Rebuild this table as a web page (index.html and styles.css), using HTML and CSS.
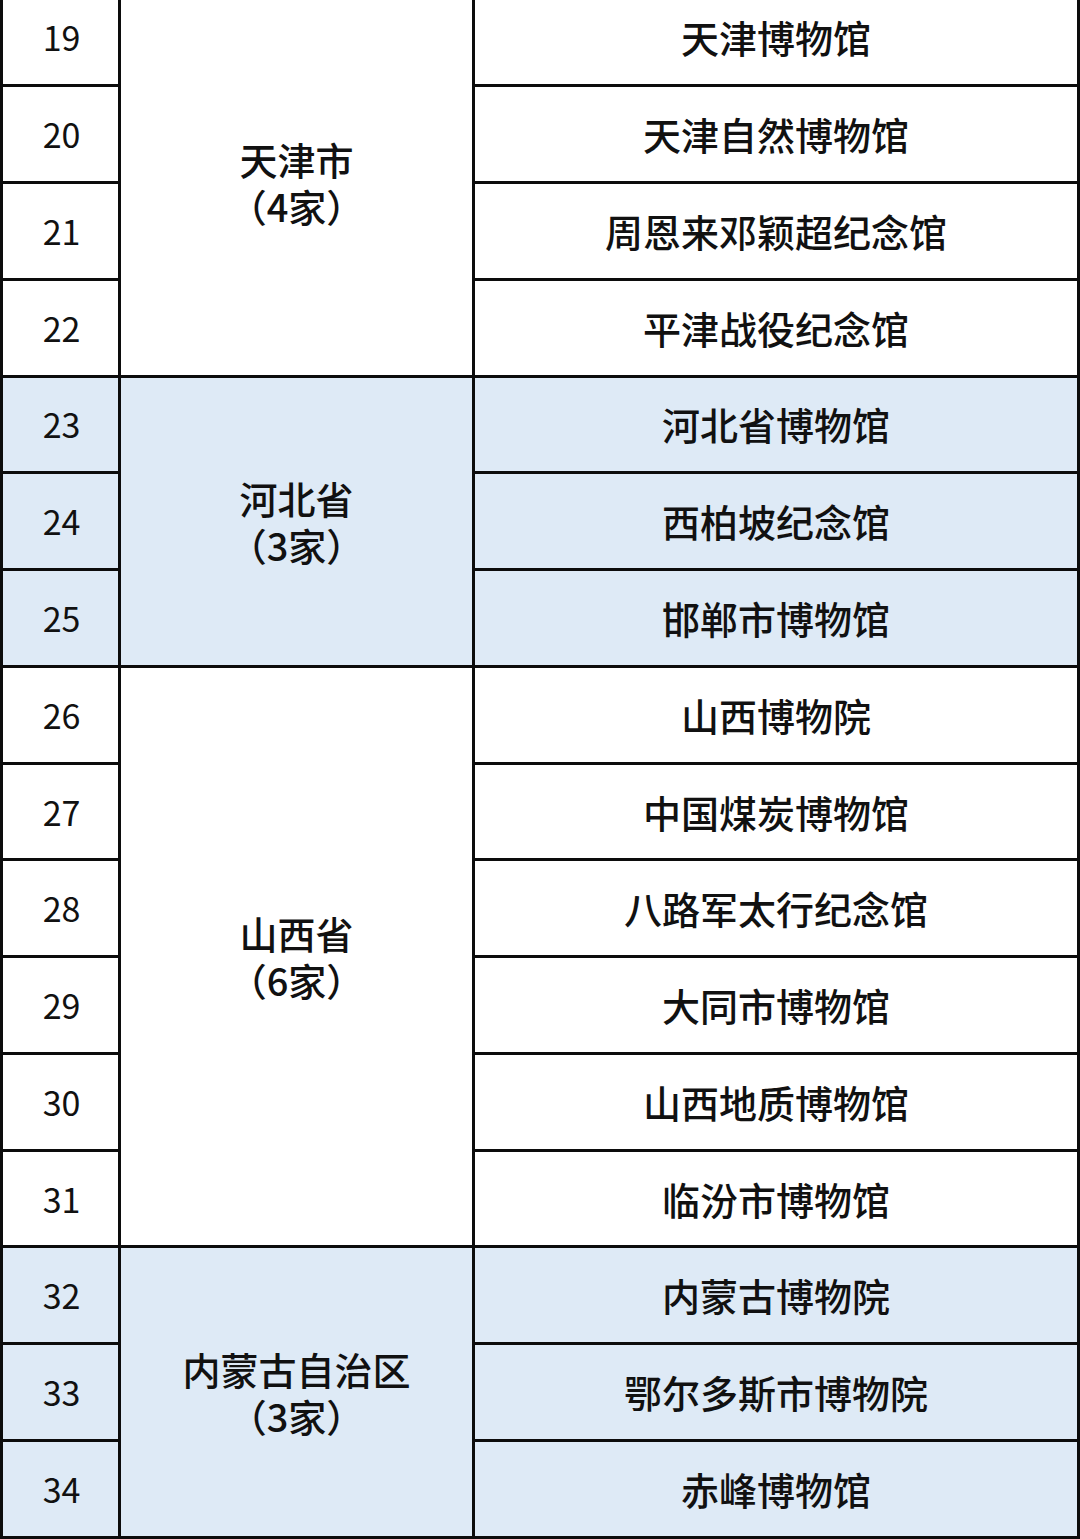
FILE: index.html
```html
<!DOCTYPE html>
<html lang="zh-CN">
<head>
<meta charset="utf-8">
<title>博物馆名单</title>
<link rel="stylesheet" href="styles.css">
</head>
<body>
<div class="table">
  <div class="cell num">19</div>
  <div class="cell prov span4"><span class="line">天津市</span><span class="line">（4家）</span></div>
  <div class="cell name">天津博物馆</div>
  <div class="cell num">20</div>
  <div class="cell name">天津自然博物馆</div>
  <div class="cell num">21</div>
  <div class="cell name">周恩来邓颖超纪念馆</div>
  <div class="cell num">22</div>
  <div class="cell name">平津战役纪念馆</div>

  <div class="cell num blue">23</div>
  <div class="cell prov span3 blue"><span class="line">河北省</span><span class="line">（3家）</span></div>
  <div class="cell name blue">河北省博物馆</div>
  <div class="cell num blue">24</div>
  <div class="cell name blue">西柏坡纪念馆</div>
  <div class="cell num blue">25</div>
  <div class="cell name blue">邯郸市博物馆</div>

  <div class="cell num">26</div>
  <div class="cell prov span6"><span class="line">山西省</span><span class="line">（6家）</span></div>
  <div class="cell name">山西博物院</div>
  <div class="cell num">27</div>
  <div class="cell name">中国煤炭博物馆</div>
  <div class="cell num">28</div>
  <div class="cell name">八路军太行纪念馆</div>
  <div class="cell num">29</div>
  <div class="cell name">大同市博物馆</div>
  <div class="cell num">30</div>
  <div class="cell name">山西地质博物馆</div>
  <div class="cell num">31</div>
  <div class="cell name">临汾市博物馆</div>

  <div class="cell num blue">32</div>
  <div class="cell prov span3 blue"><span class="line">内蒙古自治区</span><span class="line">（3家）</span></div>
  <div class="cell name blue">内蒙古博物院</div>
  <div class="cell num blue">33</div>
  <div class="cell name blue">鄂尔多斯市博物院</div>
  <div class="cell num blue">34</div>
  <div class="cell name blue">赤峰博物馆</div>
</div>
</body>
</html>
```

FILE: styles.css
```css
html, body {
  margin: 0;
  padding: 0;
  background: #ffffff;
}
body {
  width: 1080px;
  height: 1539px;
  overflow: hidden;
  font-family: "Noto Sans CJK SC", "Noto Sans", sans-serif;
  color: #111111;
}
.table {
  margin-top: -12.5px;
  width: 1080px;
  box-sizing: border-box;
  padding: 3px;
  background: #0c0c0c;
  display: grid;
  grid-template-columns: 115px 351px 602px;
  grid-auto-rows: 93.78px;
  gap: 3px;
}
.cell {
  background: #ffffff;
  display: flex;
  align-items: center;
  justify-content: center;
  text-align: center;
  font-size: 38px;
  font-weight: 500;
  line-height: 46px;
  box-sizing: border-box;
}
.blue {
  background: #deeaf6;
}
.num {
  grid-column: 1;
  font-size: 34px;
  font-weight: 400;
  padding-left: 2px;
}
.prov {
  grid-column: 2;
  flex-direction: column;
  gap: 1px;
}
.line {
  display: block;
  height: 46px;
}
.name {
  grid-column: 3;
}
.span3 { grid-row: span 3; }
.span4 { grid-row: span 4; }
.span6 { grid-row: span 6; }
```
